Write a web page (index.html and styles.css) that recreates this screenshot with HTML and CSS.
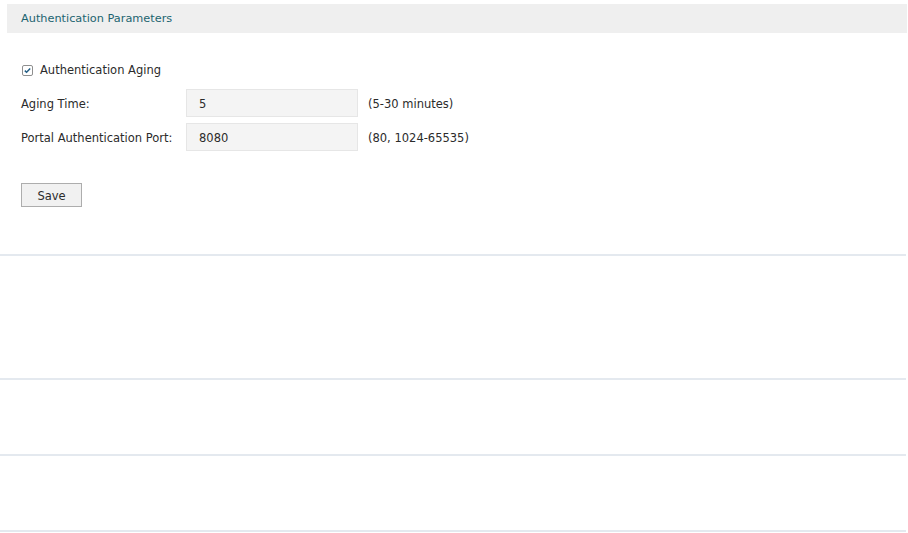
FILE: index.html
```html
<!DOCTYPE html>
<html>
<head>
<meta charset="utf-8">
<link rel="stylesheet" href="styles.css">
</head>
<body>
<div class="section first">
  <div class="panel-head">Authentication Parameters</div>
  <div class="panel-body">
    <label class="check-row">
      <span class="checkbox">
        <svg width="11" height="11" viewBox="0 0 11 11"><rect x="0.5" y="0.5" width="10" height="10" rx="1.5" fill="#fff" stroke="#8f8f8f"/><path d="M2.8 5.6 L4.6 7.3 L8.2 3.6" fill="none" stroke="#245f86" stroke-width="1.5"/></svg>
      </span>
      <span>Authentication Aging</span>
    </label>
    <div class="form-row">
      <span class="label">Aging Time:</span>
      <span class="input">5</span>
      <span class="hint">(5-30 minutes)</span>
    </div>
    <div class="form-row">
      <span class="label">Portal Authentication Port:</span>
      <span class="input">8080</span>
      <span class="hint">(80, 1024-65535)</span>
    </div>
    <div class="actions">
      <button class="btn">Save</button>
    </div>
  </div>
</div>
<div class="section s2"></div>
<div class="section s3"></div>
<div class="section s4"></div>
</body>
</html>
```
FILE: styles.css
```css
html, body {
  margin: 0;
  padding: 0;
  background: #fff;
}
body {
  font-family: "DejaVu Sans", sans-serif;
  font-size: 11.5px;
  color: #2b2b2b;
  width: 908px;
}
.section {
  width: 906px;
  border-bottom: 2px solid #e4e9ef;
  box-sizing: content-box;
}
.first {
  padding-top: 4px;
  box-sizing: border-box;
  height: 256px;
}
.s2 { height: 122px; }
.s3 { height: 74px; }
.s4 { height: 74px; }
.panel-head {
  margin-left: 7px;
  width: 900px;
  height: 29px;
  line-height: 30px;
  background: #efefef;
  padding-left: 14px;
  box-sizing: border-box;
  color: #1c646f;
  font-size: 11.3px;
}
.panel-body {
  padding-left: 21px;
}
.check-row {
  display: flex;
  align-items: center;
  gap: 7px;
  height: 16px;
  margin-top: 29px;
  padding-left: 1px;
}
.checkbox {
  display: flex;
  width: 11px;
  height: 11px;
}
.form-row {
  display: flex;
  align-items: center;
  height: 28px;
  margin-top: 6px;
}
.check-row + .form-row {
  margin-top: 11px;
}
.label {
  width: 165px;
  padding-top: 2px;
}
.input {
  width: 172px;
  height: 28px;
  box-sizing: border-box;
  background: #f4f4f4;
  border: 1px solid #e6e6e6;
  padding-left: 12px;
  padding-top: 1px;
  line-height: 26px;
}
.hint {
  margin-left: 10px;
  padding-top: 2px;
}
.actions {
  margin-top: 32px;
}
.btn {
  width: 61px;
  height: 24px;
  background: #f1f1f1;
  border: 1px solid #adadad;
  border-radius: 0;
  font-family: inherit;
  font-size: 11.5px;
  color: #2b2b2b;
  padding: 2px 0 0 0;
}
```
